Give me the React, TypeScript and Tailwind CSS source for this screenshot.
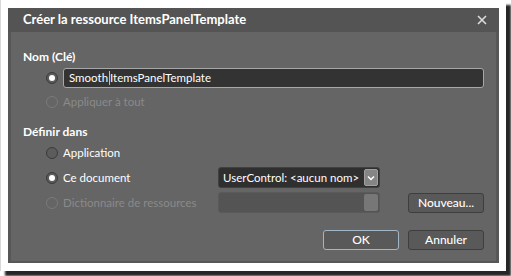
const font = { fontFamily: 'Lato, "Open Sans", "Liberation Sans", sans-serif' };

function Radio({ checked = false, disabled = false }: { checked?: boolean; disabled?: boolean }) {
  if (disabled) {
    return <span className="block h-[12px] w-[12px] shrink-0 rounded-full border border-[#7a7a7a]" />;
  }
  return (
    <span className="flex h-[12px] w-[12px] shrink-0 items-center justify-center rounded-full border border-[#3a3a3a] bg-[#5c5c5c]">
      {checked && <span className="block h-[6px] w-[6px] rounded-full bg-white" />}
    </span>
  );
}

function Button({ label, primary = false }: { label: string; primary?: boolean }) {
  return (
    <button
      type="button"
      className={`h-[20px] w-[76px] rounded-[3px] border bg-[#595959] text-[12px] font-medium leading-[18px] text-white ${
        primary ? 'border-[#a3b6c6]' : 'border-[#3e3e3e]'
      }`}
    >
      {label}
    </button>
  );
}

export default function App() {
  return (
    <div className="h-[276px] w-[511px] bg-white" style={font}>
      <div className="h-[271px] w-[506px] border-l border-[#d8d8d8] bg-white pl-[7px] pr-[7px] pt-[8px] shadow-[5px_5px_2px_rgba(0,0,0,0.85)]">
        <div className="flex h-[255px] w-[491px] flex-col">
          <div className="flex h-[24px] items-center justify-between bg-[#545454] pl-[15px] pr-[12px]">
            <span className="text-[13px] font-bold text-white">Créer la ressource ItemsPanelTemplate</span>
            <svg width="10" height="10" viewBox="0 0 10 10" className="text-[#dcdcdc]">
              <path d="M1 1 L9 9 M9 1 L1 9" stroke="currentColor" strokeWidth="1.6" />
            </svg>
          </div>
          <div className="flex flex-1 flex-col whitespace-nowrap border-x-[3px] border-b-[2px] border-[#575757] bg-[#656565] pl-[12px] pr-[12px] pt-[16px] text-[11.5px] text-white">
            <div className="h-[18px] text-[12px] font-bold leading-[18px]">Nom (Clé)</div>
            <div className="mt-[2px] flex h-[20px] items-center pl-[23px]">
              <Radio checked />
              <div className="ml-[5px] flex h-[20px] flex-1 items-center rounded-[3px] border border-[#a8a8a8] bg-[#333333] pl-[5px]">
                <span>Smooth</span>
                <span className="mx-[0.5px] block h-[14px] w-px bg-[#bdbdbd]" />
                <span>ItemsPanelTemplate</span>
              </div>
            </div>
            <div className="mt-[5px] flex h-[18px] items-center gap-[5px] pl-[23px] text-[#8a8a8a]">
              <Radio disabled />
              <span>Appliquer à tout</span>
            </div>
            <div className="mt-[12px] h-[18px] text-[12px] font-bold leading-[18px]">Définir dans</div>
            <div className="mt-[2px] flex h-[20px] items-center gap-[5px] pl-[23px]">
              <Radio />
              <span>Application</span>
            </div>
            <div className="mt-[4px] flex h-[21px] items-center pl-[23px]">
              <Radio checked />
              <span className="ml-[5px] w-[155px]">Ce document</span>
              <div className="flex h-[21px] w-[162px] items-center justify-between rounded-[3px] border border-[#404040] bg-[#2f2f2f] pl-[4px] pr-[1px]">
                <span>UserControl: &lt;aucun nom&gt;</span>
                <span className="flex h-[17px] w-[14px] items-center justify-center rounded-[2px] border border-[#a0a0a0] bg-[#858585]">
                  <svg width="8" height="6" viewBox="0 0 8 6">
                    <path d="M1 1.5 L4 4.5 L7 1.5" stroke="white" strokeWidth="1.5" fill="none" />
                  </svg>
                </span>
              </div>
            </div>
            <div className="mt-[4px] flex h-[21px] items-center pl-[23px] text-[#8a8a8a]">
              <Radio disabled />
              <span className="ml-[5px] w-[155px]">Dictionnaire de ressources</span>
              <div className="flex h-[21px] w-[162px] items-center justify-end rounded-[3px] border border-[#5a5a5a] bg-[#545454] pr-[1px]">
                <span className="block h-[17px] w-[14px] rounded-[2px] bg-[#777777]" />
              </div>
              <div className="ml-auto">
                <Button label="Nouveau..." />
              </div>
            </div>
            <div className="mt-[17px] flex justify-end gap-[9px]">
              <Button label="OK" primary />
              <Button label="Annuler" />
            </div>
          </div>
        </div>
      </div>
    </div>
  );
}
